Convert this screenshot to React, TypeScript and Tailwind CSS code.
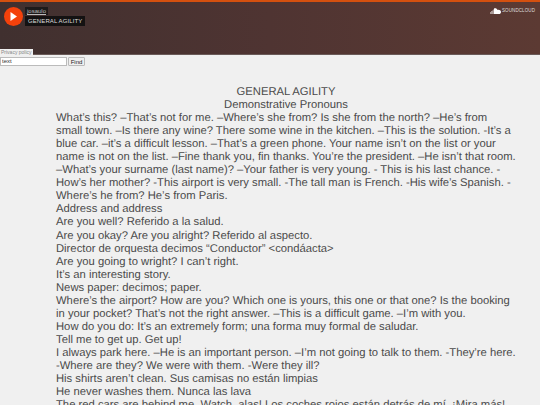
const lines = [
  "What’s this? –That’s not for me. –Where’s she from? Is she from the north? –He’s from",
  "small town. –Is there any wine? There some wine in the kitchen. –This is the solution. -It’s a",
  "blue car. –it’s a difficult lesson. –That’s a green phone. Your name isn’t on the list or your",
  "name is not on the list. –Fine thank you, fin thanks. You’re the president. –He isn’t that room.",
  "–What’s your surname (last name)? –Your father is very young. - This is his last chance. -",
  "How’s her mother? -This airport is very small. -The tall man is French. -His wife’s Spanish. -",
  "Where’s he from? He’s from Paris.",
  "Address and address",
  "Are you well? Referido a la salud.",
  "Are you okay? Are you alright? Referido al aspecto.",
  "Director de orquesta decimos “Conductor” <condáacta>",
  "Are you going to wright? I can’t right.",
  "It’s an interesting story.",
  "News paper: decimos; paper.",
  "Where’s the airport? How are you? Which one is yours, this one or that one? Is the booking",
  "in your pocket? That’s not the right answer. –This is a difficult game. –I’m with you.",
  "How do you do: It’s an extremely form; una forma muy formal de saludar.",
  "Tell me to get up. Get up!",
  "I always park here. –He is an important person. –I’m not going to talk to them. -They’re here.",
  "-Where are they? We were with them. -Were they ill?",
  "His shirts aren’t clean. Sus camisas no están limpias",
  "He never washes them. Nunca las lava",
  "The red cars are behind me. Watch, alas! Los coches rojos están detrás de mí. ¡Mira más!",
];

export default function App() {
  return (
    <div className="h-[405px] overflow-hidden bg-[#f0f0f0] font-['Liberation_Sans',Arial,sans-serif] text-[#4a4a4a]">
      <header className="flex h-[55px] items-start justify-between border-t-2 border-b border-t-[#d4500f] border-b-[#6a5a58] bg-gradient-to-r from-[#40302f] via-[#4f3432] to-[#5c3a33] pl-1 pr-[5px]">
        <div className="mt-[5px] flex gap-[2px]">
          <div className="flex h-[19px] w-[19px] items-center justify-center rounded-full bg-[#f4410b]">
            <svg width="7" height="9" viewBox="0 0 7 9">
              <path d="M0.5 0L7 4.5L0.5 9Z" fill="#fff" />
            </svg>
          </div>
          <div className="flex flex-col items-start">
            <span className="bg-[#1d1a1a] px-[2px] text-[6px] leading-[8px] text-[#bbb] underline">josaulo</span>
            <span className="mt-[1px] bg-[#141212] px-[3px] text-[6px] leading-[10px] tracking-[0.1px] text-[#ddd]">GENERAL AGILITY</span>
          </div>
        </div>
        <div className="mt-[6px] flex items-center">
          <svg width="11" height="6" viewBox="0 0 11 6">
            <path d="M0 6V4h.5v2zM1 6V3h.5v3zM2 6V2.500h.5V6zM3 6V1.500h.5V6zM4 6V.5C5 0 7 0 7.500 2 9 1.500 11 2.500 11 4s-1 2-2 2z" fill="#fff" />
          </svg>
          <span className="ml-[1px] text-[4.5px] leading-[6px] tracking-[0.1px] text-[#ddd]">SOUNDCLOUD</span>
        </div>
      </header>
      <div className="-mt-[6px] w-fit bg-[#f0f0f0] px-[1px] text-[5px] leading-[6px] text-[#888]">Privacy policy</div>
      <form className="flex items-start gap-[1px] pt-[2px]">
        <input
          readOnly
          value="text"
          className="h-[9px] w-[67px] border border-[#bbb] bg-white px-[1px] text-[6px] text-[#333]"
        />
        <button type="button" className="h-[9px] w-[17px] rounded-[1px] border border-[#bbb] bg-[#efefef] text-[6px] leading-[6px] text-[#222]">
          Find
        </button>
      </form>
      <main className="ml-[56px] mr-[24px] mt-[20px] whitespace-nowrap text-[11.25px] leading-[13.05px] [text-rendering:geometricPrecision]">
        <h1 className="text-center">GENERAL AGILITY</h1>
        <h2 className="text-center">Demonstrative Pronouns</h2>
        {lines.map((line) => (
          <p key={line}>{line}</p>
        ))}
      </main>
    </div>
  );
}
